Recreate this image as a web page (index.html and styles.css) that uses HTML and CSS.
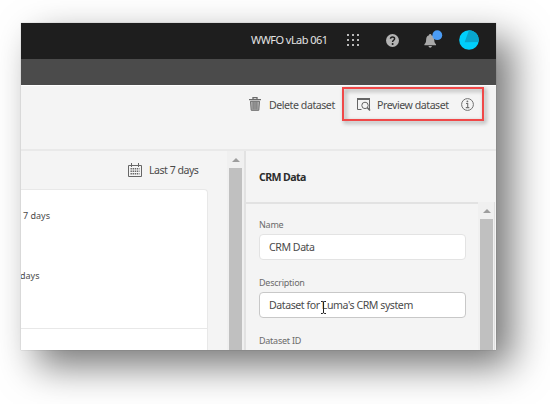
FILE: index.html
```html
<!DOCTYPE html>
<html lang="en">
<head>
<meta charset="utf-8">
<title>CRM Data</title>
<link rel="stylesheet" href="styles.css">
</head>
<body>
<div class="window">
  <header class="topbar">
    <span class="org">WWFO vLab 061</span>
    <svg class="apps" width="12" height="12" viewBox="0 0 12 12" fill="#b9b9b9"><path d="M0 0h2v2H0zM5 0h2v2H5zM10 0h2v2h-2zM0 5h2v2H0zM5 5h2v2H5zM10 5h2v2h-2zM0 10h2v2H0zM5 10h2v2H5zM10 10h2v2h-2z"/></svg>
    <svg class="help" width="13" height="13" viewBox="0 0 13 13"><circle cx="6.5" cy="6.5" r="6.5" fill="#b4b4b4"/><path d="M4.5 4.8C4.5 2.5 8.6 2.4 8.6 4.8C8.6 6.3 6.6 6.3 6.6 8" fill="none" stroke="#1e1e1e" stroke-width="1.5"/><circle cx="6.6" cy="9.9" r="1" fill="#1e1e1e"/></svg>
    <svg class="bell" width="19" height="18" viewBox="0 0 19 18"><path d="M5 4.2C5 2.6 7.4 2.6 7.4 4.2C10 5 10.2 7 10.3 9.2C10.4 11.5 11 12.3 12 13.3V14.3H.4V13.3C1.4 12.3 2 11.5 2.1 9.2C2.2 7 2.4 5 5 4.2ZM4.5 15h3.4C7.6 17.3 4.8 17.3 4.5 15Z" fill="#a9a9a9"/><circle cx="13.3" cy="4.2" r="4.9" fill="#4b9cf5"/></svg>
    <svg class="avatar" width="20" height="20" viewBox="0 0 20 20"><circle cx="10" cy="10" r="9.8" fill="#00cffc"/><path d="M10 .2A9.8 9.8 0 0 1 19.6 12L5.6 12.3Z" fill="#08a5cd"/></svg>
  </header>
  <div class="subbar"></div>
  <div class="actions">
    <svg class="trash" width="12" height="14" viewBox="0 0 12 14" fill="none" stroke="#6b6b6b"><path d="M0 2.6h12M4 2.4V.6h4v1.8" stroke-width="1.3"/><path d="M1.5 4.3H10.5L9.8 13.3H2.2Z" fill="#b5b5b5"/><path d="M4.1 5v7.5M6 5v7.5M7.9 5v7.5"/></svg>
    <span class="action-text delete">Delete dataset</span>
    <svg class="preview" width="14" height="13" viewBox="0 0 14 13" fill="none" stroke="#666"><path d="M4.5 11.5H.5V1.5H12.5V11.5" /><path d="M0 1H13" stroke-width="2"/><circle cx="8" cy="7.4" r="3.2"/><path d="M10.2 9.6L13 12.5" stroke-width="1.5"/></svg>
    <span class="action-text preview-text">Preview dataset</span>
    <svg class="info" width="13" height="13" viewBox="0 0 13 13" fill="none" stroke="#707070"><circle cx="6.5" cy="6.5" r="5.9"/><path d="M5 5.5h1.7v4M4.8 9.6h3.5" stroke-width="1.1"/><circle cx="6.4" cy="3.4" r=".9" fill="#707070" stroke="none"/></svg>
    <div class="highlight"></div>
  </div>
  <main class="body">
    <section class="main">
      <div class="range">
        <svg width="14" height="14" viewBox="0 0 14 14" fill="none" stroke="#666"><path d="M.5 2.5h13v11H.5zM3.5 0v4M10.5 0v4" /><path d="M2.5 5.7h9M2.5 8.2h9M2.5 10.7h9" stroke-dasharray="1.4 .7" stroke-width="1.5"/></svg>
        <span class="range-text">Last 7 days</span>
      </div>
      <div class="card">
        <div class="metrics">
          <span class="metric first">7 days</span>
          <span class="metric second">days</span>
        </div>
      </div>
    </section>
    <div class="scroll left"><i class="arrow"></i><i class="thumb"></i></div>
    <aside class="panel">
      <div class="side-main">
        <h1>CRM Data</h1>
        <div class="fields">
          <label>Name</label>
          <div class="field">CRM Data</div>
          <label>Description</label>
          <div class="field active">Dataset for Luma's CRM system
            <svg class="cursor" width="7" height="13" viewBox="0 0 7 13" fill="none" stroke="#222"><path d="M1 .5h1.7l.8.8.8-.8H6M3.5 1v11M1 12.5h1.7l.8-.8.8.8H6"/></svg>
          </div>
          <label>Dataset ID</label>
        </div>
      </div>
      <div class="scroll right"><i class="arrow"></i><i class="thumb"></i></div>
    </aside>
  </main>
</div>
</body>
</html>
```
FILE: styles.css
```css
* { box-sizing: border-box; }
html, body { margin: 0; width: 550px; height: 404px; overflow: hidden; background: #fff; }
body { padding: 23px 0 0 21px; font-family: "Noto Sans", "Open Sans", sans-serif; color: #4b4b4b; white-space: nowrap; }
svg { display: block; flex: none; overflow: visible; }
.window { width: 475px; height: 327px; display: flex; flex-direction: column; background: #f4f4f4; box-shadow: 16px 16px 36px rgba(0,0,0,.54), 0 0 1px rgba(0,0,0,.3); }
.topbar { height: 36px; flex: none; background: #1e1e1e; display: flex; align-items: center; padding: 0 0 2px 230px; }
.org { width: 96px; margin-top: -2px; color: #e4e4e4; font-size: 11px; letter-spacing: -.55px; }
.help { margin-left: 27px; }
.bell { margin-left: 25px; }
.avatar { margin-left: 16px; }
.subbar { height: 26px; flex: none; background: #4b4b4b; }
.actions { position: relative; height: 66px; flex: none; border-top: 1px solid #fff; border-bottom: 2px solid #e9e9e9; display: flex; align-items: flex-start; padding: 11px 0 0 228px; }
.action-text { flex: none; font-size: 10.6px; line-height: 16px; letter-spacing: -.45px; }
.delete { margin-left: 8px; width: 88px; }
.preview { margin-top: 1px; }
.preview-text { margin-left: 6px; width: 84px; }
.info { margin-top: 1px; }
.highlight { position: absolute; left: 321px; top: 1px; width: 142px; height: 34px; border: 2px solid #f04848; filter: drop-shadow(2px 2px 2px rgba(0,0,0,.4)); }
.body { flex: 1; display: flex; min-height: 0; }
.main { width: 206px; display: flex; flex-direction: column; }
.range { height: 38px; flex: none; display: flex; align-items: center; padding-left: 107px; gap: 7px; }
.range-text { font-size: 10.6px; letter-spacing: -.5px; }
.card { width: 187px; flex: 1; background: #fff; border: 1px solid #e8e8e8; border-width: 1px 1px 0 0; border-radius: 0 4px 0 0; overflow: hidden; }
.metrics { height: 139px; border-bottom: 1px solid #e8e8e8; padding: 18px 0 0 2px; display: flex; flex-direction: column; font-size: 9px; }
.metric { line-height: 16px; }
.second { margin: 44px 0 0 -3px; }
.scroll { display: flex; flex-direction: column; background: #f0f0f0; }
.arrow { width: 0; height: 0; border: 4px solid transparent; border-top: 0; border-bottom: 4px solid #9d9d9d; margin: 7px 0 6px 5px; }
.thumb { flex: 1; width: 13px; margin-left: 2px; background: #c0c0c0; }
.left { width: 17px; }
.panel { flex: 1; display: flex; border-left: 2px solid #e2e2e2; }
.side-main { width: 232px; flex: none; }
h1 { margin: 0; height: 53px; border-bottom: 2px solid #e2e2e2; padding-left: 13px; font-size: 10.6px; line-height: 53px; font-weight: 700; letter-spacing: -.6px; color: #2c2c2c; }
.fields { padding: 13px 0 0 13px; display: flex; flex-direction: column; }
label { font-size: 9px; line-height: 16px; letter-spacing: -.25px; color: #6b6b6b; }
.field { position: relative; width: 207px; height: 26px; background: #fff; border: 1px solid #e3e3e3; border-radius: 4px; padding-left: 9px; font-size: 10.6px; line-height: 24px; letter-spacing: -.45px; margin: 1px 0 15px; }
.active { border-color: #c8c8c8; }
.cursor { position: absolute; left: 60px; top: 8px; }
.right { width: 17px; margin-top: 51px; border-right: 1px solid #e0e0e0; }
```
